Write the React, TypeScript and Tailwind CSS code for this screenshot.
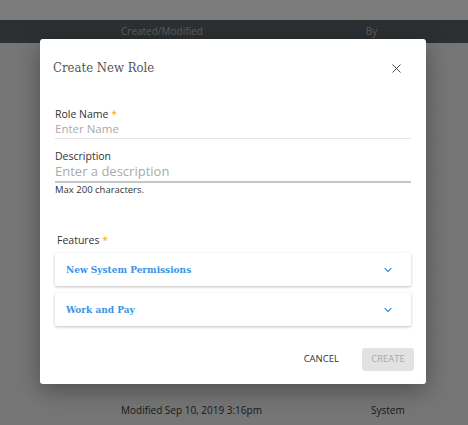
import { ChevronDown, X } from "lucide-react";

const rows = Array.from({ length: 11 });

export default function App() {
  return (
    <div className="relative w-[468px] h-[425px] overflow-hidden bg-[#f4f4f4] font-['Open_Sans',sans-serif]">
      {/* Page behind the dialog */}
      <div className="h-[20px] bg-[#f6f6f6]" />
      <div className="flex h-[23px] items-center bg-[#5a6064] text-[10px] text-[#b9bdc0]">
        <span className="ml-[121px]">Created/Modified</span>
        <span className="ml-[163px]">By</span>
      </div>
      {rows.map((_, i) => (
        <div key={i} className="h-[32px] border-b border-[#e8e8e8] bg-[#ececec]" />
      ))}
      <div className="flex h-[30px] items-center bg-[#ececec] text-[10px] text-[#333]">
        <span className="ml-[121px]">Modified Sep 10, 2019 3:16pm</span>
        <span className="ml-[109px]">System</span>
      </div>

      {/* Overlay */}
      <div className="absolute inset-0 bg-black/50" />

      {/* Dialog */}
      <div className="absolute left-[40px] top-[39px] flex h-[345px] w-[386px] flex-col rounded-[3px] bg-white shadow-[0_6px_24px_rgba(0,0,0,0.35)]">
        <div className="flex h-[56px] items-center justify-between pl-[13px] pr-[22px] pt-[2px]">
          <h2 className="font-['DejaVu_Serif_Condensed','DejaVu_Serif',serif] text-[13px] font-light text-[#555]">
            Create New Role
          </h2>
          <X className="h-[15px] w-[15px] text-[#444]" strokeWidth={1.5} />
        </div>

        <div className="flex flex-col px-[15px] pt-[12px]">
          <label className="text-[10.5px] leading-[14px] text-[#333]">
            Role Name <span className="text-[#f5a623]">*</span>
          </label>
          <div className="border-b border-[#e4e4e4] pb-[1px] text-[11.5px] leading-[16px] text-[#aaa]">
            Enter Name
          </div>

          <label className="mt-[10px] text-[10.5px] leading-[14px] text-[#333]">Description</label>
          <div className="border-b-2 border-[#c4c4c4] pb-[2px] text-[13px] leading-[16px] text-[#aaa]">
            Enter a description
          </div>
          <div className="pt-[1px] text-[9.5px] leading-[12px] text-[#333]">Max 200 characters.</div>

          <label className="ml-[2px] mt-[37px] text-[10.5px] leading-[14px] text-[#333]">
            Features <span className="text-[#f5a623]">*</span>
          </label>

          <div className="mt-[6px] flex flex-col gap-[7px]">
            {["New System Permissions", "Work and Pay"].map((t) => (
              <div
                key={t}
                className="flex h-[33px] items-center justify-between rounded-[2px] bg-white pl-[11px] pr-[17px] shadow-[0_1px_3px_rgba(0,0,0,0.25)]"
              >
                <span className="font-['DejaVu_Serif_Condensed','DejaVu_Serif',serif] text-[10px] font-bold text-[#3a93e6]">
                  {t}
                </span>
                <ChevronDown className="h-[12px] w-[12px] text-[#3a93e6]" strokeWidth={2.2} />
              </div>
            ))}
          </div>
        </div>

        <div className="mt-auto flex items-center justify-end gap-[23px] pb-[13px] pr-[12px]">
          <button className="text-[9.5px] text-[#333]">CANCEL</button>
          <button className="h-[23px] w-[52px] rounded-[3px] bg-[#e2e2e2] text-[9.5px] text-[#aaa]">CREATE</button>
        </div>
      </div>
    </div>
  );
}
